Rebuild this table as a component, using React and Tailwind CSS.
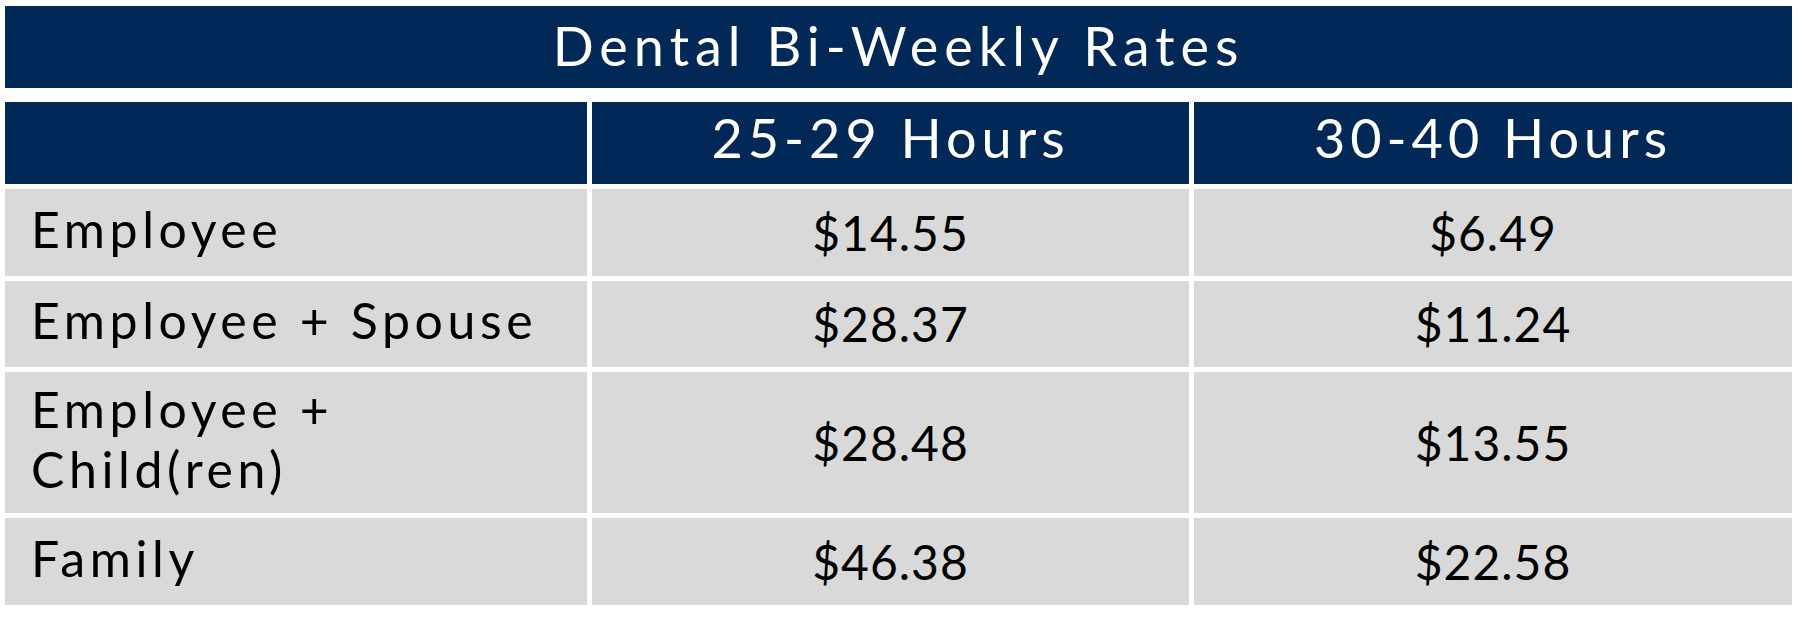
const rows = [
  { label: ["Employee"], a: "$14.55", b: "$6.49", h: "h-[87px]" },
  { label: ["Employee + Spouse"], a: "$28.37", b: "$11.24", h: "h-[86px]" },
  { label: ["Employee +", "Child(ren)"], a: "$28.48", b: "$13.55", h: "h-[141px]" },
  { label: ["Family"], a: "$46.38", b: "$22.58", h: "h-[87px]" },
]

export default function App() {
  return (
    <div className="w-[1804px] h-[624px] bg-white pt-[6px] pl-[5px] font-['Lato',sans-serif] text-black">
      <div className="w-[1787px]">
        <div className="h-[82px] bg-[#012856] flex items-center justify-center pb-[2px]">
          <h1 className="text-white text-[54px] tracking-[6px] leading-none">Dental Bi-Weekly Rates</h1>
        </div>

        <div className="mt-[14px] grid grid-cols-[582px_597px_598px] gap-x-[5px] gap-y-[5px]">
          <div className="h-[82px] bg-[#012856]" />
          <div className="h-[82px] bg-[#012856] flex items-center justify-center pb-[10px]">
            <span className="text-white text-[54px] tracking-[5px] leading-none">25-29 Hours</span>
          </div>
          <div className="h-[82px] bg-[#012856] flex items-center justify-center pb-[10px]">
            <span className="text-white text-[54px] tracking-[5px] leading-none">30-40 Hours</span>
          </div>

          {rows.map((r) => (
            <div key={r.label.join(" ")} className="contents">
              <div className={`${r.h} bg-[#d9d9d9] flex flex-col justify-center pl-[26px] pb-[8px] text-[50px] tracking-[4.6px] leading-[60px]`}>
                {r.label.map((l) => (
                  <span key={l}>{l}</span>
                ))}
              </div>
              <div className={`${r.h} bg-[#d9d9d9] flex items-center justify-center text-[48px] tracking-[1px] leading-none`}>
                {r.a}
              </div>
              <div className={`${r.h} bg-[#d9d9d9] flex items-center justify-center text-[48px] tracking-[1px] leading-none`}>
                {r.b}
              </div>
            </div>
          ))}
        </div>
      </div>
    </div>
  )
}
